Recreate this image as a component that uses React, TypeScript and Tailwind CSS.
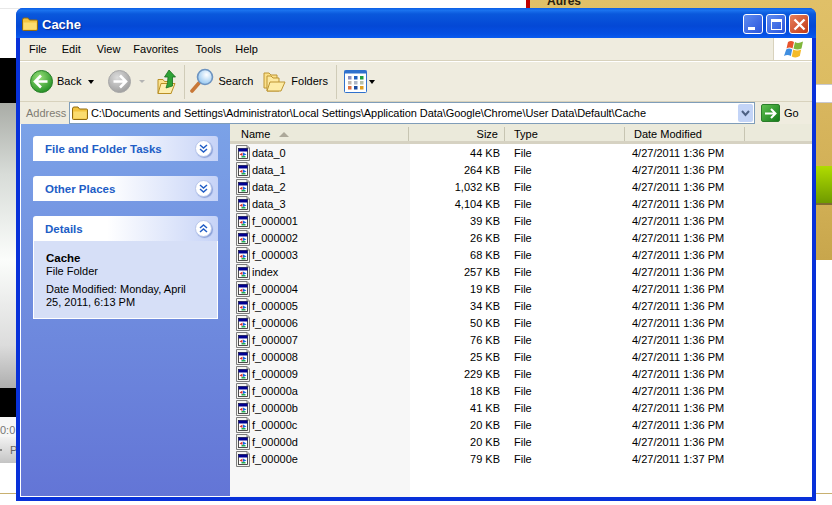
const files = [
  ['data_0', '44 KB', '4/27/2011 1:36 PM'],
  ['data_1', '264 KB', '4/27/2011 1:36 PM'],
  ['data_2', '1,032 KB', '4/27/2011 1:36 PM'],
  ['data_3', '4,104 KB', '4/27/2011 1:36 PM'],
  ['f_000001', '39 KB', '4/27/2011 1:36 PM'],
  ['f_000002', '26 KB', '4/27/2011 1:36 PM'],
  ['f_000003', '68 KB', '4/27/2011 1:36 PM'],
  ['index', '257 KB', '4/27/2011 1:36 PM'],
  ['f_000004', '19 KB', '4/27/2011 1:36 PM'],
  ['f_000005', '34 KB', '4/27/2011 1:36 PM'],
  ['f_000006', '50 KB', '4/27/2011 1:36 PM'],
  ['f_000007', '76 KB', '4/27/2011 1:36 PM'],
  ['f_000008', '25 KB', '4/27/2011 1:36 PM'],
  ['f_000009', '229 KB', '4/27/2011 1:36 PM'],
  ['f_00000a', '18 KB', '4/27/2011 1:36 PM'],
  ['f_00000b', '41 KB', '4/27/2011 1:36 PM'],
  ['f_00000c', '20 KB', '4/27/2011 1:36 PM'],
  ['f_00000d', '20 KB', '4/27/2011 1:36 PM'],
  ['f_00000e', '79 KB', '4/27/2011 1:37 PM'],
];

function FileIcon() {
  return (
    <svg width="14" height="16" viewBox="0 0 14 16" className="-mt-[2px] shrink-0">
      <path d="M0.5 0.5H11L13.5 3V15.5H0.5Z" fill="#f4f4f0" stroke="#7d7d7d" />
      <path d="M11 0.5V3H13.5" fill="#ddd" stroke="#7d7d7d" />
      <rect x="2.5" y="3.5" width="9" height="10" fill="#fff" stroke="#222" strokeWidth="0.8" />
      <rect x="2.5" y="3.5" width="9" height="3" fill="#000090" />
      <path d="M3.5 9.5 6.5 7.5V11Z" fill="#d83030" />
      <path d="M7 7.5 10.5 9.5 7 11Z" fill="#1464e0" />
      <rect x="5.5" y="11" width="4" height="1.5" fill="#20b050" />
    </svg>
  );
}

function FolderIcon({ size = 16 }: { size?: number }) {
  return (
    <svg width={size} height={size * 0.875} viewBox="0 0 16 14">
      <path d="M0.5 3V12.5Q0.5 13.5 1.5 13.5H14Q15.5 13.5 15.5 12V4Q15.5 3 14.5 3H7.5L6 1H2Q0.5 1 0.5 3Z" fill="#f3c440" stroke="#8f6a12" />
      <path d="M1.5 5.5H14.5V12.5H1.5Z" fill="#fbdc70" />
    </svg>
  );
}

function NavCircle({ id, from, to, stroke, flip }: { id: string; from: string; to: string; stroke: string; flip?: boolean }) {
  return (
    <svg width="23" height="23" viewBox="0 0 23 23">
      <defs>
        <radialGradient id={id} cx="40%" cy="32%" r="75%">
          <stop offset="0" stopColor={from} />
          <stop offset="1" stopColor={to} />
        </radialGradient>
      </defs>
      <circle cx="11.5" cy="11.5" r="11" fill={`url(#${id})`} stroke={stroke} />
      <path
        d={flip ? 'M12 5.5 18 11.5 12 17.5M17 11.5H5.5' : 'M11 5.5 5 11.5 11 17.5M6 11.5H17.5'}
        fill="none"
        stroke="#fff"
        strokeWidth="2.6"
      />
    </svg>
  );
}

function UpIcon() {
  return (
    <svg width="20" height="26" viewBox="0 0 20 26">
      <path d="M1 10.5H6L7.5 12.5H14V24.5H1Z" fill="#fbe28e" stroke="#b98f24" />
      <path d="M1 24.5 4 14.5H18L14 24.5Z" fill="#fdeeb0" stroke="#b98f24" />
      <path d="M12 1 18.5 8H15.5V17Q12 18 9 19 11 14 11 8H7.5Z" fill="#2fa336" stroke="#1a6f20" strokeWidth="0.8" />
    </svg>
  );
}

function SearchIcon() {
  return (
    <svg width="24" height="27" viewBox="0 0 24 27">
      <defs>
        <radialGradient id="lens" cx="60%" cy="35%" r="70%">
          <stop offset="0" stopColor="#fff" />
          <stop offset="1" stopColor="#8fc4f0" />
        </radialGradient>
      </defs>
      <path d="M9 15 2 23" stroke="#c87838" strokeWidth="3.6" strokeLinecap="round" />
      <circle cx="15" cy="9" r="7.5" fill="url(#lens)" stroke="#6e94c0" strokeWidth="1.6" />
    </svg>
  );
}

function FoldersIcon() {
  return (
    <svg width="23" height="22" viewBox="0 0 23 22">
      <path d="M1 2H6L8 4H14V17H1Z" fill="#fbe08a" stroke="#bd9533" />
      <path d="M4 5H8L10 7H16V20H4Z" fill="#fde9a0" stroke="#bd9533" />
      <path d="M4 20 7 11H22L18 20Z" fill="#fdeca6" stroke="#bd9533" />
    </svg>
  );
}

function ViewsIcon() {
  const cells = ['#8a8ec0', '#2060c0', '#20a040', '#c0b8b0', '#b0b8c8', '#b8c0a8', '#e07040', '#1a4aa0', '#e0a020'];
  return (
    <svg width="23" height="23" viewBox="0 0 23 23">
      <rect x="0.5" y="0.5" width="22" height="22" rx="1" fill="#fff" stroke="#2f71cd" />
      <rect x="0.5" y="0.5" width="22" height="3" fill="#2f71cd" />
      {cells.map((c, i) => (
        <rect key={i} x={4 + (i % 3) * 6} y={6 + Math.floor(i / 3) * 5} width="3.5" height="3.5" fill={c} />
      ))}
    </svg>
  );
}

function XpLogo() {
  return (
    <svg width="21" height="19" viewBox="0 0 21 19">
      <path d="M5 2Q8 0 11 2L9.5 8.5Q6.5 6.5 3.5 8.5Z" fill="#e8532c" />
      <path d="M12 2Q15 4 20 1.5L18.5 8.5Q14.5 10.5 10.5 8.5Z" fill="#7fb63c" />
      <path d="M3.2 9.5Q6 7.5 9.2 9.5L7.8 16Q4.5 14 1 16Z" fill="#3f8ee0" />
      <path d="M10.2 9.5Q14 11.5 18.2 9.5L16.8 16Q13 18.5 8.8 16.5Z" fill="#f4bb2a" />
    </svg>
  );
}

function Chevrons({ up }: { up?: boolean }) {
  return (
    <div className="flex h-[17px] w-[17px] items-center justify-center rounded-full border border-[#b8c6ea] bg-white shadow-[1px_1px_1px_#8aa0d8]">
      <svg width="9" height="9" viewBox="0 0 9 9" fill="none" stroke="#215dc6" strokeWidth="1.5">
        <path d={up ? 'M1 4 4.5 1 8 4M1 8 4.5 5 8 8' : 'M1 1 4.5 4 8 1M1 5 4.5 8 8 5'} />
      </svg>
    </div>
  );
}

function PaneHeader({ title, up }: { title: string; up?: boolean }) {
  return (
    <div className="flex h-[25px] items-center justify-between rounded-t-[3px] bg-[linear-gradient(to_right,#ffffff_40%,#c6d3f7)] pl-3 pr-[6px]">
      <span className="pt-[3px] text-[11.5px] font-bold text-[#215dc6]">{title}</span>
      <div className="-mt-[1px]">
        <Chevrons up={up} />
      </div>
    </div>
  );
}

function Backdrop() {
  return (
    <div className="flex h-[505px] w-[832px]">
      <div className="flex w-[526px] flex-col bg-white">
        <div className="h-[9px] border-b border-[#e8e8e8]" />
        <div className="h-[49px]" />
        <div className="h-[45px] bg-black" />
        <div className="h-[285px] w-full bg-[linear-gradient(to_bottom,#a9aca6,#d8dcd8_25%,#fbfdfb_55%,#dcdcdc_85%,#aeaeae)]" />
        <div className="h-[29px] bg-black" />
        <div className="flex h-[20px] items-center bg-[#f6f6f6] pt-[6px] text-[11px] text-[#777]">0:0</div>
        <div className="flex h-[26px] items-center bg-[linear-gradient(to_bottom,#f2f2f2,#c4c4c4)] text-[11px] text-[#666]">
          <span className="h-[2px] w-[2px] bg-[#888]" />
          <span className="ml-[8px]">P</span>
        </div>
        <div className="h-[30px]" />
        <div className="h-[1px] bg-[#c8b070]" />
      </div>
      <div className="h-[8px] w-[4px] bg-[#c00000]" />
      <div className="flex flex-1 flex-col bg-white">
        <div className="flex h-[84px] flex-col bg-[linear-gradient(to_bottom,#e0c068,#dcbc62)]">
          <div className="-mt-[8px] pl-[17px] text-[12px] font-bold text-[#2a2010]">Aures</div>
        </div>
        <div className="h-[19px] border-y border-[#c8c8d0] bg-white" />
        <div className="h-[63px] bg-[linear-gradient(to_bottom,#d8b65e,#d3b158)]" />
        <div className="h-[39px] border-b-2 border-[#7f6c30] bg-[linear-gradient(to_bottom,#b0dc00,#6f9a00)]" />
        <div className="h-[55px] bg-[linear-gradient(to_bottom,#d0ae54,#c8a64c)]" />
        <div className="h-[233px]" />
        <div className="h-[1px] bg-[#c8b070]" />
      </div>
    </div>
  );
}

export default function App() {
  return (
    <div className="relative h-[505px] w-[832px] overflow-hidden bg-white font-['Liberation_Sans',sans-serif] text-[11px] text-black">
      <Backdrop />
      <div className="absolute left-[16px] top-[8px] flex h-[493px] w-[800px] flex-col rounded-t-[7px] bg-[#0831d9] px-[4px] pb-[4px]">
        <div className="-mx-[4px] flex h-[30px] shrink-0 items-center rounded-t-[7px] bg-[linear-gradient(to_bottom,#0a5ee6,#1a72ee_8%,#0a58dc_20%,#0448d6_60%,#0550e4_88%,#0a5cf0)] pl-[6px] pr-[7px] pt-[2px]">
          <FolderIcon />
          <span className="ml-[4px] mt-[2px] text-[13px] font-bold text-white [text-shadow:1px_1px_1px_#0a2a90]">Cache</span>
          <div className="ml-auto flex gap-[3px]">
            <div className="flex h-[20px] w-[20px] items-end rounded-[3px] border border-white bg-[linear-gradient(135deg,#5f8cf0,#2a55dc)] pb-[3px] pl-[4px]">
              <div className="h-[3px] w-[7px] bg-white" />
            </div>
            <div className="flex h-[20px] w-[20px] items-center justify-center rounded-[3px] border border-white bg-[linear-gradient(135deg,#5f8cf0,#2a55dc)]">
              <div className="h-[11px] w-[11px] border border-t-[3px] border-white" />
            </div>
            <div className="flex h-[20px] w-[20px] items-center justify-center rounded-[3px] border border-white bg-[linear-gradient(135deg,#e8805c,#c03a18)]">
              <svg width="13" height="13" viewBox="0 0 13 13" stroke="#fff" strokeWidth="2.4">
                <path d="M1.5 1.5 11.5 11.5M11.5 1.5 1.5 11.5" />
              </svg>
            </div>
          </div>
        </div>

        <div className="flex h-[23px] shrink-0 border-b border-[#d8d2bd] bg-[#efecdf]">
          <div className="flex flex-1 items-center">
            <span className="ml-[9px]">File</span>
            <span className="ml-[15px]">Edit</span>
            <span className="ml-[16px]">View</span>
            <span className="ml-[13px]">Favorites</span>
            <span className="ml-[17px]">Tools</span>
            <span className="ml-[14px]">Help</span>
          </div>
          <div className="flex w-[39px] items-center justify-center border-l border-[#d8d2bd] bg-white">
            <XpLogo />
          </div>
        </div>

        <div className="flex h-[40px] shrink-0 items-center border-t border-white bg-[#efecdf] pl-[10px]">
          <NavCircle id="backGrad" from="#9be27a" to="#1b8a1f" stroke="#2a7f2a" />
          <span className="ml-[4px]">Back</span>
          <span className="ml-[7px] h-0 w-0 border-x-[3.5px] border-t-[4px] border-x-transparent border-t-black" />
          <div className="ml-[14px]">
            <NavCircle id="fwdGrad" from="#dcdcdc" to="#9a9a9a" stroke="#a8a8a8" flip />
          </div>
          <span className="ml-[8px] h-0 w-0 border-x-[3px] border-t-[3px] border-x-transparent border-t-[#b4b4b4]" />
          <div className="ml-[12px]">
            <UpIcon />
          </div>
          <div className="ml-[7px] h-[34px] w-[1px] bg-[#d0ccb8]" />
          <div className="ml-[5px]">
            <SearchIcon />
          </div>
          <span className="ml-[4px]">Search</span>
          <div className="ml-[10px]">
            <FoldersIcon />
          </div>
          <span className="ml-[5px]">Folders</span>
          <div className="ml-[8px] h-[34px] w-[1px] bg-[#d0ccb8]" />
          <div className="ml-[7px]">
            <ViewsIcon />
          </div>
          <span className="ml-[2px] h-0 w-0 border-x-[3px] border-t-[4px] border-x-transparent border-t-black" />
        </div>

        <div className="flex h-[23px] shrink-0 items-center border-t border-[#d8d2bd] bg-[#efecdf]">
          <span className="ml-[6px] w-[43px] text-[#7f7c73]">Address</span>
          <div className="flex h-[22px] w-[686px] items-center border border-[#7f9db9] bg-white pl-[2px] pr-[1px]">
            <FolderIcon />
            <span className="ml-[3px] flex-1 whitespace-nowrap tracking-[-0.075px]">C:\Documents and Settings\Administrator\Local Settings\Application Data\Google\Chrome\User Data\Default\Cache</span>
            <div className="flex h-[18px] w-[15px] items-center justify-center rounded-[2px] bg-[#c3d4f7]">
              <svg width="9" height="7" viewBox="0 0 9 7" fill="none" stroke="#4d6185" strokeWidth="2">
                <path d="M1 1 4.5 5 8 1" />
              </svg>
            </div>
          </div>
          <div className="ml-[6px] flex h-[18px] w-[19px] items-center justify-center rounded-[2px] border border-[#2a7d2a] bg-[linear-gradient(135deg,#5fc050,#137a1a)]">
            <svg width="13" height="11" viewBox="0 0 13 11" fill="none" stroke="#fff" strokeWidth="2">
              <path d="M7 1 11.5 5.5 7 10M11 5.5H1" />
            </svg>
          </div>
          <span className="ml-[4px]">Go</span>
        </div>

        <div className="flex min-h-0 flex-1 border-l border-white">
          <div className="flex w-[209px] shrink-0 flex-col gap-[15px] border-b border-white bg-[linear-gradient(to_bottom,#7ba2e7,#6375d6)] px-[12px] pt-[12px]">
            <PaneHeader title="File and Folder Tasks" />
            <PaneHeader title="Other Places" />
            <div>
              <PaneHeader title="Details" up />
              <div className="h-[78px] border border-t-0 border-white bg-[#d6dff7] pl-[12px] pt-[11px] leading-[13px]">
                <div className="text-[11.5px] font-bold">Cache</div>
                <div>File Folder</div>
                <div className="mt-[5px] w-[150px]">Date Modified: Monday, April 25, 2011, 6:13 PM</div>
              </div>
            </div>
          </div>

          <div className="flex min-w-0 flex-1 flex-col bg-white">
            <div className="flex h-[20px] shrink-0 border-b-[3px] border-[#d6d2c2] bg-[#ebeadb] pt-[3px]">
              <div className="flex w-[179px] items-center border-r border-[#c7c5b2] pl-[11px]">
                Name
                <span className="ml-[9px] h-0 w-0 border-x-[5px] border-b-[5px] border-x-transparent border-b-[#aca899]" />
              </div>
              <div className="flex w-[96px] items-center justify-end border-r border-[#c7c5b2] pr-[6px]">Size</div>
              <div className="flex w-[120px] items-center border-r border-[#c7c5b2] pl-[9px]">Type</div>
              <div className="flex w-[120px] items-center border-r border-[#c7c5b2] pl-[9px]">Date Modified</div>
            </div>
            <div className="flex-1 bg-[linear-gradient(to_right,#f7f7f7_180px,#ffffff_180px)] pt-[1px]">
              {files.map(([name, size, date]) => (
                <div key={name} className="flex h-[17px] items-center">
                  <div className="flex w-[179px] items-center pl-[6px]">
                    <FileIcon />
                    <span className="ml-[2px]">{name}</span>
                  </div>
                  <div className="w-[91px] text-right">{size}</div>
                  <div className="ml-[14px] w-[118px]">File</div>
                  <div>{date}</div>
                </div>
              ))}
            </div>
          </div>
        </div>
      </div>
    </div>
  );
}
